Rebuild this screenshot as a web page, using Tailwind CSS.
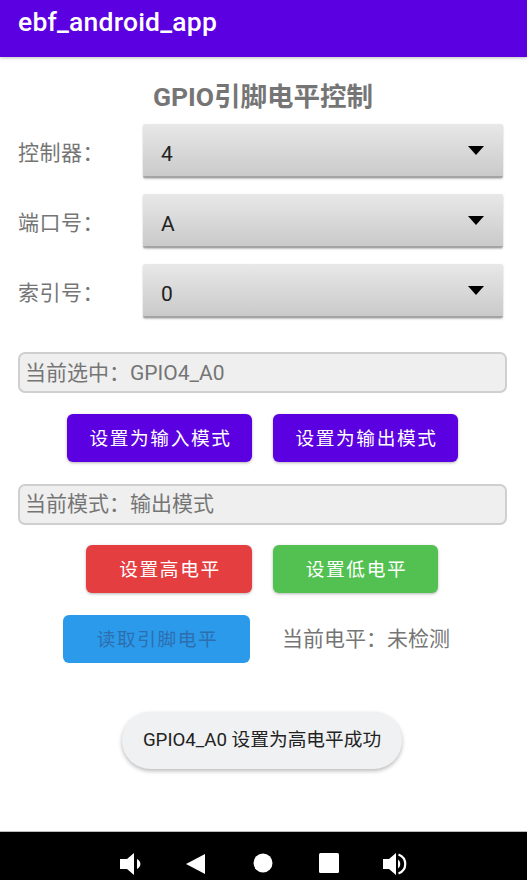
<!DOCTYPE html>
<html lang="zh-CN">
<head>
    <meta charset="UTF-8">
    <meta name="viewport" content="width=device-width, initial-scale=1.0">
    <title>ebf_android_app</title>
    <script src="https://cdn.jsdelivr.net/npm/@tailwindcss/browser@4"></script>
</head>
<body class="bg-white overflow-hidden font-['Roboto','Noto_Sans_CJK_SC',sans-serif]">
<div class="relative flex flex-col h-[880px] w-[527px]">
    <!-- app bar -->
    <header class="h-[57px] shrink-0 bg-[#5b00e0] pl-[18px] pt-[4px] shadow-[0_1px_3px_rgba(0,0,0,0.25)]">
        <h1 class="text-[26.5px] leading-[35px] font-medium text-white tracking-[0.2px]">ebf_android_app</h1>
    </header>

    <main class="flex-1 flex flex-col">
        <h2 class="mt-[22px] h-[36px] text-center text-[26.5px] leading-[36px] font-bold text-[#757575] pr-[1px]">GPIO引脚电平控制</h2>

        <!-- spinners -->
        <div class="mt-[9px] flex flex-col gap-[16px] pl-[18px] pr-[24px]">
            <div class="flex items-center h-[54px]">
                <span class="w-[125px] text-[21px] text-[#757575] tracking-[0.5px] pt-[5px]">控制器：</span>
                <div class="flex-1 h-full flex items-center justify-between pl-[18px] pr-[19px] rounded-[2px] bg-gradient-to-b from-[#e8e8e8] to-[#cacaca] border-b-2 border-[#a4a4a4] shadow-[0_1px_2px_rgba(0,0,0,0.25)]">
                    <span class="text-[21px] text-[#222222] pt-[10px]">4</span>
                    <svg width="16" height="9" viewBox="0 0 16 9"><path d="M0 0H16L8 9Z" fill="#000"/></svg>
                </div>
            </div>
            <div class="flex items-center h-[54px]">
                <span class="w-[125px] text-[21px] text-[#757575] tracking-[0.5px] pt-[5px]">端口号：</span>
                <div class="flex-1 h-full flex items-center justify-between pl-[18px] pr-[19px] rounded-[2px] bg-gradient-to-b from-[#e8e8e8] to-[#cacaca] border-b-2 border-[#a4a4a4] shadow-[0_1px_2px_rgba(0,0,0,0.25)]">
                    <span class="text-[21px] text-[#222222] pt-[10px]">A</span>
                    <svg width="16" height="9" viewBox="0 0 16 9"><path d="M0 0H16L8 9Z" fill="#000"/></svg>
                </div>
            </div>
            <div class="flex items-center h-[54px]">
                <span class="w-[125px] text-[21px] text-[#757575] tracking-[0.5px] pt-[5px]">索引号：</span>
                <div class="flex-1 h-full flex items-center justify-between pl-[18px] pr-[19px] rounded-[2px] bg-gradient-to-b from-[#e8e8e8] to-[#cacaca] border-b-2 border-[#a4a4a4] shadow-[0_1px_2px_rgba(0,0,0,0.25)]">
                    <span class="text-[21px] text-[#222222] pt-[10px]">0</span>
                    <svg width="16" height="9" viewBox="0 0 16 9"><path d="M0 0H16L8 9Z" fill="#000"/></svg>
                </div>
            </div>
        </div>

        <div class="mt-[34px] mx-[18px] w-[489px] h-[41px] flex items-center pl-[5px] pt-[2px] rounded-[7px] bg-[#efefef] border-2 border-[#cfcfcf] text-[21px] text-[#757575]">当前选中：GPIO4_A0</div>

        <div class="mt-[21px] flex gap-[21px] pl-[67px]">
            <button class="w-[185px] h-[48px] pl-[2px] pt-[2px] rounded-[6px] bg-[#5b00e0] text-white text-[18.7px] tracking-[1.6px] shadow-[0_1px_3px_rgba(0,0,0,0.3)]">设置为输入模式</button>
            <button class="w-[185px] h-[48px] pl-[2px] pt-[2px] rounded-[6px] bg-[#5b00e0] text-white text-[18.7px] tracking-[1.6px] shadow-[0_1px_3px_rgba(0,0,0,0.3)]">设置为输出模式</button>
        </div>

        <div class="mt-[22px] mx-[18px] w-[489px] h-[41px] flex items-center pl-[5px] rounded-[7px] bg-[#efefef] border-2 border-[#cfcfcf] text-[21px] text-[#757575]">当前模式：输出模式</div>

        <div class="mt-[20px] flex gap-[21px] pl-[86px]">
            <button class="w-[166px] h-[48px] pl-[2px] pt-[2px] rounded-[6px] bg-[#e53e41] text-white text-[18.7px] tracking-[1.6px] shadow-[0_1px_3px_rgba(0,0,0,0.3)]">设置高电平</button>
            <button class="w-[165px] h-[48px] pl-[2px] pt-[2px] rounded-[6px] bg-[#53c152] text-white text-[18.7px] tracking-[1.6px] shadow-[0_1px_3px_rgba(0,0,0,0.3)]">设置低电平</button>
        </div>

        <div class="mt-[22px] flex items-center pl-[63px]">
            <button class="w-[187px] h-[48px] pl-[2px] pt-[2px] rounded-[6px] bg-[#2c9aeb] text-[#2d6fae] text-[18.7px] tracking-[1.6px]">读取引脚电平</button>
            <span class="ml-[32px] pt-[2px] text-[21px] text-[#757575]">当前电平：未检测</span>
        </div>
    </main>

    <!-- toast -->
    <div class="absolute left-[122px] top-[712px] w-[280px] h-[57px] flex items-center justify-center rounded-full bg-[#f0f1f2] text-[18.7px] text-[#222222] shadow-[0_2px_4px_rgba(0,0,0,0.28)]">GPIO4_A0 设置为高电平成功</div>

    <!-- system nav bar -->
    <nav class="relative h-[49px] shrink-0 bg-black border-t border-[#bdbdbd] text-white">
        <svg class="absolute left-[119px] top-[20px]" width="24" height="24" viewBox="0 0 24 24" fill="#fff"><path d="M1 7H8L15 1V23L8 17H1Z"/><path d="M18 7C22.500 9.500 22.500 14.500 18 17Z"/></svg>
        <svg class="absolute left-[185px] top-[21px]" width="21" height="22" viewBox="0 0 21 22" fill="#fff"><path d="M1 11L20 1V21Z"/></svg>
        <svg class="absolute left-[253px] top-[21px]" width="20" height="20" viewBox="0 0 20 20" fill="#fff"><circle cx="10" cy="10" r="9.500"/></svg>
        <svg class="absolute left-[319px] top-[21px]" width="20" height="20" viewBox="0 0 20 20" fill="#fff"><rect width="20" height="20" rx="1.500"/></svg>
        <svg class="absolute left-[382px] top-[20px]" width="26" height="24" viewBox="0 0 26 24" fill="#fff"><path d="M1 7H7L14 1V23L7 17H1Z"/><path d="M16 7.500C19 9.500 19 14.500 16 16.500Z"/><path d="M16.500 2.500C25.500 6 25.500 18 16.500 21.500" fill="none" stroke="#fff" stroke-width="2.200"/></svg>
    </nav>
</div>
</body>
</html>
